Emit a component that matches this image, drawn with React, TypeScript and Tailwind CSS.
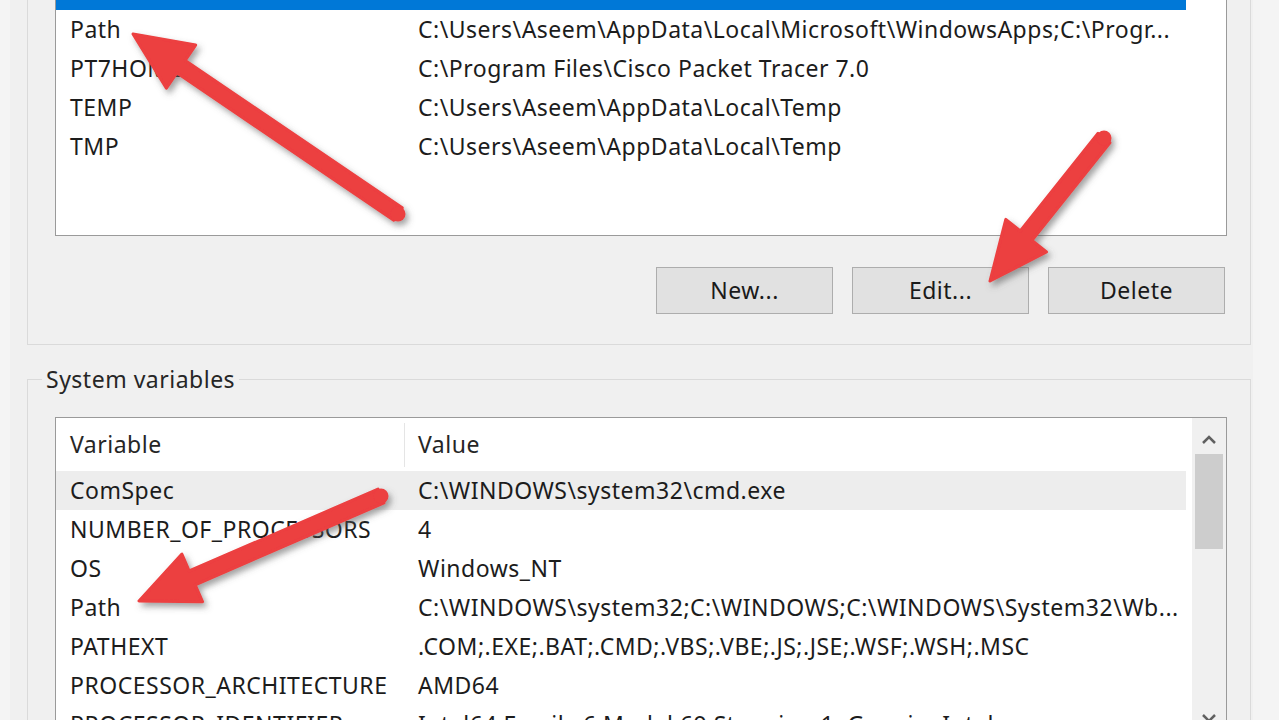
import React from "react";

type Row = [string, string];

const userRows: Row[] = [
  ["Path", "C:\\Users\\Aseem\\AppData\\Local\\Microsoft\\WindowsApps;C:\\Progr..."],
  ["PT7HOME", "C:\\Program Files\\Cisco Packet Tracer 7.0"],
  ["TEMP", "C:\\Users\\Aseem\\AppData\\Local\\Temp"],
  ["TMP", "C:\\Users\\Aseem\\AppData\\Local\\Temp"],
];

const systemRows: Row[] = [
  ["ComSpec", "C:\\WINDOWS\\system32\\cmd.exe"],
  ["NUMBER_OF_PROCESSORS", "4"],
  ["OS", "Windows_NT"],
  ["Path", "C:\\WINDOWS\\system32;C:\\WINDOWS;C:\\WINDOWS\\System32\\Wb..."],
  ["PATHEXT", ".COM;.EXE;.BAT;.CMD;.VBS;.VBE;.JS;.JSE;.WSF;.WSH;.MSC"],
  ["PROCESSOR_ARCHITECTURE", "AMD64"],
  ["PROCESSOR_IDENTIFIER", "Intel64 Family 6 Model 69 Stepping 1, GenuineIntel"],
];

function arrowPoints(tx: number, ty: number, hx: number, hy: number) {
  const dx = hx - tx;
  const dy = hy - ty;
  const len = Math.hypot(dx, dy);
  const ux = dx / len;
  const uy = dy / len;
  const px = -uy;
  const py = ux;
  const hl = 58;
  const hw = 26;
  const sw = 7.5;
  const bx = hx - ux * hl;
  const by = hy - uy * hl;
  const pts = [
    [tx + px * sw, ty + py * sw],
    [bx + px * sw, by + py * sw],
    [bx + px * hw, by + py * hw],
    [hx, hy],
    [bx - px * hw, by - py * hw],
    [bx - px * sw, by - py * sw],
    [tx - px * sw, ty - py * sw],
  ];
  return pts.map(([x, y]) => `${x.toFixed(1)},${y.toFixed(1)}`).join(" ");
}

function Arrow({ tail, head }: { tail: [number, number]; head: [number, number] }) {
  return (
    <g filter="url(#shadow)">
      <polygon points={arrowPoints(tail[0], tail[1], head[0], head[1])} fill="#ec3f40" strokeLinejoin="round" stroke="#ec3f40" strokeWidth="3" />
      <circle cx={tail[0]} cy={tail[1]} r="7.5" fill="#ec3f40" />
    </g>
  );
}

function ListRow({ row, className = "" }: { row: Row; className?: string }) {
  return (
    <div className={`flex h-[39px] w-[1130px] items-center whitespace-nowrap ${className}`}>
      <div className="w-[348px] overflow-hidden pl-[14px]">{row[0]}</div>
      <div className="flex-1 overflow-hidden pl-[14px]">{row[1]}</div>
    </div>
  );
}

function Button({ label }: { label: string }) {
  return (
    <button className="flex h-[47px] w-[177px] items-center justify-center border border-[#adadad] bg-[#e1e1e1] text-[#1a1a1a]">
      {label}
    </button>
  );
}

export default function App() {
  return (
    <div
      className="relative h-[720px] w-[1279px] overflow-hidden bg-[#f0f0f0] text-[23px] tracking-[0.5px] text-[#1c1c1c]"
      style={{ fontFamily: '"Noto Sans", "Open Sans", sans-serif' }}
    >
      <div className="flex h-full">
        <div className="w-[10px] bg-[#f4f4f4]" />
        <div className="w-[17px]" />
        <div className="w-[1224px]">
          {/* user variables group */}
          <div className="-mt-[40px] border-x border-b border-[#dadada] pb-[30px] pl-[27px] pr-[24px]">
            <div className="h-[276px] w-[1172px] border border-[#9a9a9a] bg-white pt-[10px]">
              <div className="h-[39px] w-[1130px] bg-[#0078d7]" />
              {userRows.map((r) => (
                <ListRow key={r[0]} row={r} />
              ))}
            </div>
            <div className="mt-[31px] flex justify-end gap-[19px] pr-[1px]">
              <Button label="New..." />
              <Button label="Edit..." />
              <Button label="Delete" />
            </div>
          </div>

          {/* system variables group */}
          <div className="relative mt-[34px] h-[500px] border border-[#dadada] pl-[27px] pr-[22px] pt-[37px]">
            <div className="absolute -top-[16px] left-[14px] bg-[#f0f0f0] px-[4px] leading-[30px] text-[#262626]">System variables</div>
            <div className="flex h-[400px] w-[1172px] border border-[#9a9a9a] bg-white">
              <div className="flex-1">
                <div className="flex h-[53px] items-center">
                  <div className="w-[348px] pl-[14px] text-[#262626]">Variable</div>
                  <div className="h-[44px] w-px bg-[#e5e5e5]" />
                  <div className="pl-[13px] text-[#262626]">Value</div>
                </div>
                {systemRows.map((r, i) => (
                  <ListRow key={r[0]} row={r} className={i === 0 ? "bg-[#ededed]" : ""} />
                ))}
              </div>
              <div className="flex w-[34px] flex-col items-center bg-[#f0f0f0]">
                <svg width="16" height="12" viewBox="0 0 16 12" className="mt-[16px]">
                  <path d="M2 9 L8 3 L14 9" fill="none" stroke="#606060" strokeWidth="2.5" />
                </svg>
                <div className="mt-[8px] h-[95px] w-[28px] bg-[#cdcdcd]" />
                <div className="flex-1" />
                <svg width="16" height="12" viewBox="0 0 16 12" className="mb-[92px]">
                  <path d="M2 3 L8 9 L14 3" fill="none" stroke="#606060" strokeWidth="2.5" />
                </svg>
              </div>
            </div>
          </div>
        </div>
        <div className="ml-[2px] flex-1 bg-[#f4f4f4]" />
      </div>

      <svg className="pointer-events-none absolute left-0 top-0" width="1279" height="720">
        <defs>
          <filter id="shadow" x="-20%" y="-20%" width="140%" height="140%">
            <feDropShadow dx="3" dy="4" stdDeviation="3" floodColor="#555" floodOpacity="0.55" />
          </filter>
        </defs>
        <Arrow tail={[398, 214]} head={[133, 34]} />
        <Arrow tail={[1104, 138]} head={[990, 281]} />
        <Arrow tail={[381, 496]} head={[139, 601]} />
      </svg>
    </div>
  );
}
